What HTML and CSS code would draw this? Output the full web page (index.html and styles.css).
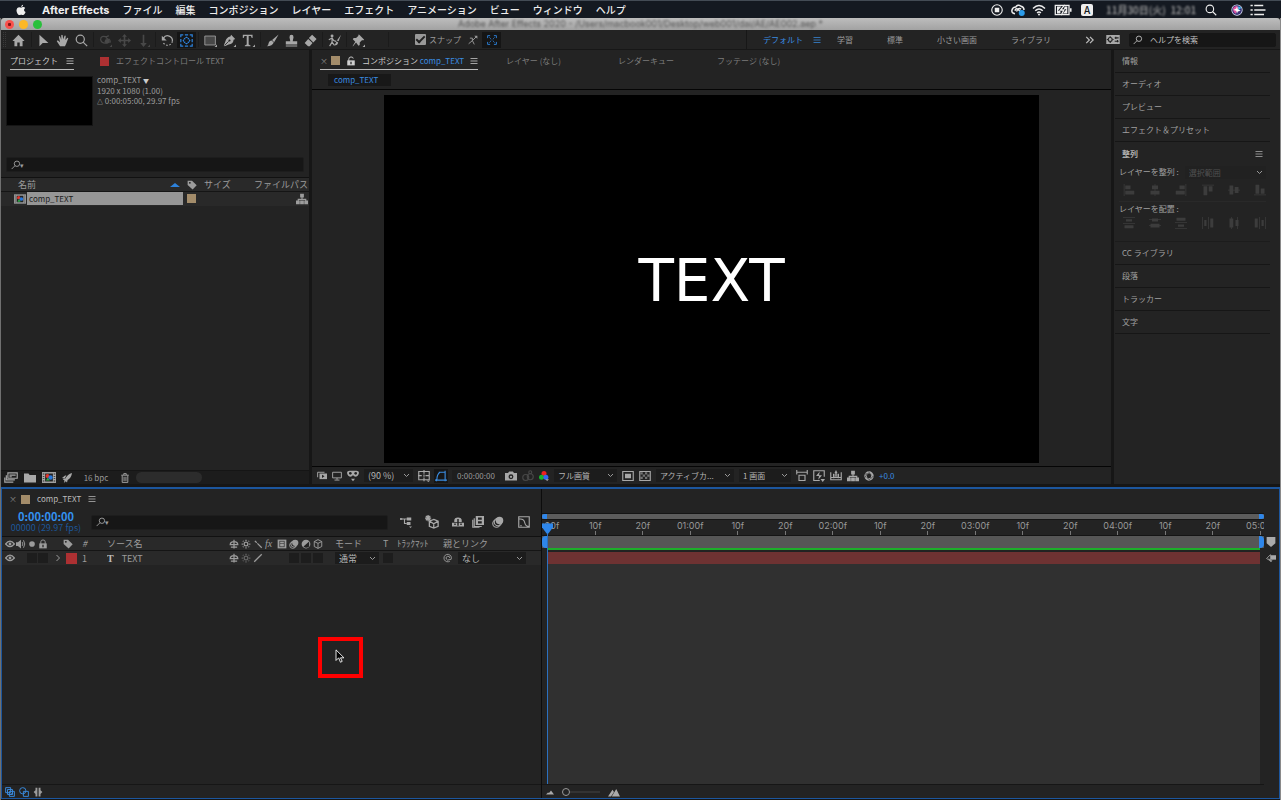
FILE: index.html
```html
<!DOCTYPE html>
<html lang="ja">
<head>
<meta charset="utf-8">
<title>After Effects</title>
<link rel="stylesheet" href="styles.css">
</head>
<body>
<svg class="sprite" aria-hidden="true">
  <symbol id="apple" viewBox="0 0 16 16"><path d="M10.800 1c.1 1.300-1 2.800-2.500 2.900C8.100 2.500 9.400 1.200 10.800 1zM8.400 4.800c.6 0 1.500-.8 2.700-.8 1.100 0 2 .6 2.500 1.300-2.300 1.400-1.900 4.500.5 5.500-.6 1.600-1.900 4-3.300 4-1 0-1.300-.6-2.500-.6s-1.600.6-2.500.6C3.900 14.800 2 11.500 2 8.700 2 5.700 3.900 4.200 5.700 4.200c1.100 0 2 .6 2.700.6z"/></symbol>
  <symbol id="home" viewBox="0 0 16 16"><path d="M8 1 0.500 8.500H3V15h3.500v-4.500h3V15H13V8.500h2.500z"/></symbol>
  <symbol id="arrow" viewBox="0 0 16 16"><path d="M3 1v14l4-4h7z"/></symbol>
  <symbol id="hand" viewBox="0 0 16 16"><path d="M5 15 1 9q0-1.500 1.500-1L5 10 3.500 3.500Q4 2 5 3l1.500 4L6.500 1.500Q7.200.2 8.200 1.500l.6 5L10.500 2q1.200-.8 1.500.5L11.500 7.500 14 4.500q1.200 0 1 1L12.500 12 11 15z"/></symbol>
  <symbol id="zoom" viewBox="0 0 16 16"><circle cx="6.500" cy="6.500" r="5" class="ln"/><path class="ln" d="m10 10 5 5"/></symbol>
  <symbol id="find" viewBox="0 0 16 16"><circle cx="9.500" cy="6" r="4.300" class="ln"/><path class="ln" d="M6.500 9 1 14.500"/></symbol>
  <symbol id="orbit" viewBox="0 0 16 16"><path class="ln" d="M10 4Q2 1 2 7q1 5 8 4m2-5q3 3 1 5M8 4l4-2M8 4l4 3"/><circle cx="10" cy="9" r="3"/><path d="M13 16h3v-3z"/></symbol>
  <symbol id="pan" viewBox="0 0 16 16"><path d="M8 0l3 3.500H9V7h3.500V5L16 8l-3.500 3V9H9v3.500h2L8 16l-3-3.500h2V9H3.500v2L0 8l3.500-3v2H7V3.500H5z"/></symbol>
  <symbol id="dolly" viewBox="0 0 16 16"><path d="M7 1h2v10h3l-4 5-4-5h3z"/><path d="M13 16h3v-3z"/></symbol>
  <symbol id="rotate" viewBox="0 0 16 16"><path class="ln" d="M3 5a6 6 0 0 1 11 4"/><path class="ln dash" d="M14 9a6 6 0 0 1-11.500 1"/><path d="M1 2v6h6z"/></symbol>
  <symbol id="anchor" viewBox="0 0 16 16"><path class="ln" d="M1 4V1h3m2 0h4m2 0h3v3m0 2v4m0 2v3h-3m-2 0H6m-2 0H1v-3m0-2V6M5 5l1.500 1.500M11 5 9.500 6.500M5 11l1.500-1.500M11 11 9.500 9.500"/><path d="M8 3l2 2H6zM8 13l2-2H6zM3 8l2-2v4zM13 8l-2-2v4z"/></symbol>
  <symbol id="rect" viewBox="0 0 16 16"><path fill="#484848" stroke="currentColor" d="M1 2.500h13v11H1z"/><path d="M13 16h3v-3z"/></symbol>
  <symbol id="pen" viewBox="0 0 16 16"><path d="M10 1l5 5-2 1q0 5-6 6l-5 2L1 14l2-5q1-5 6-6z"/><path stroke="#232323" d="m2 14 5-5"/><circle cx="8" cy="8" r="1.300" fill="#232323"/><path d="M13 16h3v-3z"/></symbol>
  <symbol id="type" viewBox="0 0 16 16"><path d="M1 1h12v4h-1l-1-2.500H8.200V13l2.300 1v1H3.500v-1l2.300-1V2.500H3L2 5H1zM13 16h3v-3z"/></symbol>
  <symbol id="brush" viewBox="0 0 16 16"><path d="M15.500.5 10 10 7.500 7.500zM7 8l2.500 2.500Q8 15 1 15q2-1 2-3 1-4 4-4z"/></symbol>
  <symbol id="stamp" viewBox="0 0 16 16"><path d="M6.500 9 5.500 4Q5.500 1 8 1t2.500 3l-1 5H15v4H1V9zM1 14h14v1.500H1z"/></symbol>
  <symbol id="eraser" viewBox="0 0 16 16"><path d="m10 1 5.500 5-4 4.500L6 5zM5.200 6l5.300 5L7 15H5L.8 11z"/></symbol>
  <symbol id="roto" viewBox="0 0 16 16"><circle cx="5" cy="2.500" r="1.800"/><path class="ln" d="M1 7l4-2 2 3 3 1M5 5v5l-3 5m3-5 3 4"/><path d="m16 1-3 8-2-1zM10.500 9l2 1.500Q12 14 8 14z"/></symbol>
  <symbol id="pin" viewBox="0 0 16 16"><path d="m9 1 6 6-1.500 1-1-.5-3 3v3l-1.500 1-3-4-4 5 0-1 3-5-3-3 1-1.500h3l3-3-.5-1z"/><path d="M13 16h3v-3z"/></symbol>
  <symbol id="snap" viewBox="0 0 16 16"><path class="ln" d="M1 14l6-5 3 6M7 9V5H3m4 4 6-6"/><path d="M10 1h5v5z"/></symbol>
  <symbol id="bounds" viewBox="0 0 16 16"><path class="ln" d="M1 5V1h4m6 0h4v4m0 6v4h-4M5 15H1v-4M4 4l2 2m6-2-2 2m-6 6 2-2m6 2-2-2M6 8h1m2 0h1"/></symbol>
  <symbol id="burger" viewBox="0 0 16 16"><path class="ln" d="M1 3h14M1 8h14M1 13h14"/></symbol>
  <symbol id="more" viewBox="0 0 16 16"><path class="ln bold" d="m2 3 5 5-5 5m6-10 5 5-5 5"/></symbol>
  <symbol id="wsp" viewBox="0 0 24 16"><path d="M0 0h24v16H0z"/><g fill="none" stroke="#232323" stroke-width="2"><circle cx="7" cy="8" r="3.500"/><path d="M7 2v2m0 8v2M1 8h2m8 0h2M15 5h7m-7 6h7M17 3v4m3 2v4"/></g></symbol>
  <symbol id="lock" viewBox="0 0 16 16"><path class="ln" d="M4.500 8V4.500q0-3 3.500-3t3.500 3V8"/><path d="M2 7h12v8H2z"/><path stroke="#232323" stroke-width="2" d="M8 9v4"/></symbol>
  <symbol id="unlock" viewBox="0 0 16 16"><path class="ln" d="M4.500 8V5q0-3.500 3.500-3.500T11.500 4"/><path d="M2 7h12v8H2z"/><path stroke="#232323" stroke-width="2" d="M8 9v4"/></symbol>
  <symbol id="tag" viewBox="0 0 16 16"><path fill-rule="evenodd" d="M1 1h7l7.500 7.500L9 15 1 8zM4.500 3a1.400 1.400 0 1 0 .1 0z"/></symbol>
  <symbol id="tree" viewBox="0 0 16 16"><path class="ln" d="M8 5v4M3 12V8.500h10V12"/><path d="M5.500 1h5v5h-5zM0 10h5v5H0zm11 0h5v5h-5zm-5.500 0h5v5h-5z"/></symbol>
  <symbol id="comp" viewBox="0 0 18 14"><path d="M0 0h18v14H0z"/><path fill="#232323" d="M4 2h10v10H4zM1 2h2v1H1zm0 3h2v1H1zm0 3h2v1H1zm0 3h2v1H1zM15 2h2v1h-2zm0 3h2v1h-2zm0 3h2v1h-2zm0 3h2v1h-2z"/><circle cx="7" cy="5" r="2.500" fill="#e0352b"/><circle cx="11" cy="7" r="2.800" fill="#2878dc"/><path fill="#2eaa49" d="m5 11 2.500-4L10 11z"/></symbol>
  <symbol id="clips" viewBox="0 0 18 14"><path class="ln" d="M5 1h12v7H5zM3 4v6h11M1 7v6h11M7 4h8M7 6h3"/></symbol>
  <symbol id="folder" viewBox="0 0 16 14"><path d="M0 1h6l1.500 2H16v10H0z"/></symbol>
  <symbol id="rocket" viewBox="0 0 16 16"><path d="M16 0q-1 8-7 11l-1 4-2-2-3 3 1-4-3-2 4-1Q9 2 16 0zM0 8l5-4 2 0-3 5z"/></symbol>
  <symbol id="trash" viewBox="0 0 16 16"><path class="ln" d="M2 3.500h12M6 3V1h4v2M3.500 4v11h9V4M6.500 6v7m3-7v7"/></symbol>
  <symbol id="eye" viewBox="0 0 16 16"><path class="ln bold" d="M1 8q7-9 14 0-7 8-14 0z"/><circle cx="8" cy="8" r="2.300"/></symbol>
  <symbol id="sound" viewBox="0 0 16 16"><path d="M0 5h3l5-4v14l-5-4H0z"/><path class="ln" d="M10 5q2 3 0 6m2-9q4 6 0 12"/></symbol>
  <symbol id="dot" viewBox="0 0 16 16"><circle cx="8" cy="8" r="4.500"/></symbol>
  <symbol id="shy" viewBox="0 0 16 16"><path class="ln bold" d="M8 1v14M2 9q0-5 6-5t6 5M1 9h14M3 13h10"/></symbol>
  <symbol id="sun" viewBox="0 0 16 16"><circle cx="8" cy="8" r="3" class="ln bold"/><path class="ln bold" d="M8 1v2m0 10v2M1 8h2m10 0h2M3 3l1 1m8 8 1 1M3 13l1-1m8-8 1-1"/></symbol>
  <symbol id="back" viewBox="0 0 16 16"><path class="ln bold" d="m3 3 3 3m1 1 7 7"/></symbol>
  <symbol id="slash" viewBox="0 0 16 16"><path class="ln bold" d="M2 14 14 2"/></symbol>
  <symbol id="film" viewBox="0 0 16 16"><path d="M1 1h14v14H1z"/><path fill="#232323" d="M4 3h8v10H4z"/><path d="M5 4h6v3H5zm0 4h6v4H5z"/></symbol>
  <symbol id="blur" viewBox="0 0 16 16"><circle cx="10" cy="6" r="5"/><circle cx="8" cy="8" r="5" class="ln"/><circle cx="6" cy="10" r="5" class="ln"/></symbol>
  <symbol id="adjust" viewBox="0 0 16 16"><circle cx="8" cy="8" r="7"/><path fill="#232323" d="M13 4v8q-5 4-9 0z"/></symbol>
  <symbol id="cube" viewBox="0 0 16 16"><path class="ln" d="m8 1 6 3v8l-6 3-6-3V4zM2 4l6 3 6-3M8 7v8"/></symbol>
  <symbol id="star3d" viewBox="0 0 16 16"><path class="ln" d="m10 5 5 2v6l-5 2-5-2V7zM5 7l5 3 5-3m-5 3v5M3.500 0v7M0 3.500h7M1 1l5 5m0-5L1 6"/></symbol>
  <symbol id="flow" viewBox="0 0 16 16"><path class="ln" d="M0 4h9M6 4v6h3"/><path d="M9 2h6v4H9zm0 6h5v4H9zm3 6h4l-2 2zM0 3h3v2H0z"/></symbol>
  <symbol id="shyguy" viewBox="0 0 16 16"><path d="M3 6q0-4 5-4t5 4v2H3zM0 9h16v5H0z"/><path stroke="#232323" stroke-width="2" d="M8 4v9M3 11h2m6 0h2"/></symbol>
  <symbol id="blend" viewBox="0 0 16 16"><path d="M5 0h11v12H5z"/><path class="ln" d="M3 3v11h10M1 5v10h9"/><path fill="#232323" d="M8 2h5v3H8zm0 5h5v3H8z"/></symbol>
  <symbol id="graph" viewBox="0 0 16 16"><path class="ln" d="M1 1h14v14H1zM1 4h2m0 9h2M3 4q5 0 6 5t6 5"/></symbol>
  <symbol id="swirl" viewBox="0 0 16 16"><path class="ln" d="M11 8a3 3 0 1 0-1 2.500q4 1 3.500-3A6 6 0 1 0 11 13"/></symbol>
  <symbol id="monitor" viewBox="0 0 16 16"><path class="ln" d="M1 2h14v9H1zM8 11v3M4 14.500h8"/></symbol>
  <symbol id="previews" viewBox="0 0 16 16"><path d="M4 4h12v9H4z"/><path class="ln" d="M1 10V2h11"/><path fill="#232323" d="m8 6 4 2.500L8 11z"/></symbol>
  <symbol id="mask" viewBox="0 0 18 16"><path d="M0 3q0-3 4-3h10q4 0 4 3-1 6-6 6L9 7 6 9Q1 9 0 3zM6 12h6l-3 4z"/><g fill="#232323"><circle cx="5" cy="4" r="2"/><circle cx="13" cy="4" r="2"/></g></symbol>
  <symbol id="guides" viewBox="0 0 16 16"><path class="ln" d="M1 2h14v11H1zM8 0v5m0 5v5M0 7.500h5m5 0h5M8 6v3"/><path d="M11 14h5l-2 2z"/></symbol>
  <symbol id="shape" viewBox="0 0 16 16"><path class="ln" d="M2.500 13q0-7 4-10H14M0 13.500h16M13.500 1v14M2 12v3M5 3h3"/></symbol>
  <symbol id="camera" viewBox="0 0 16 14"><path d="M0 3h4l1.500-2h5L12 3h4v10H0z"/><circle cx="8" cy="8" r="3.200" fill="#232323"/><circle cx="8" cy="8" r="1.500"/></symbol>
  <symbol id="person" viewBox="0 0 16 16"><circle cx="5" cy="10" r="4" class="ln"/><circle cx="11" cy="9" r="4" class="ln"/><circle cx="11" cy="3" r="2" class="ln"/></symbol>
  <symbol id="rgb" viewBox="0 0 16 16"><circle cx="8" cy="4" r="4" fill="#f02020"/><circle cx="4" cy="10" r="4" fill="#17b52b"/><circle cx="11" cy="10" r="4" fill="#3467ef"/><path d="M10 13h6l-3 3z"/></symbol>
  <symbol id="roi" viewBox="0 0 16 14"><path class="ln" d="M1 1h14v12H1z"/><path d="M4 4h8v6H4z"/></symbol>
  <symbol id="check" viewBox="0 0 16 14"><path class="ln" d="M1 1h14v12H1z"/><path opacity=".6" d="M2 2h3v3H2zm6 0h3v3H8zM5 5h3v3H5zm6 0h3v3h-3zM2 8h3v3H2zm6 0h3v3H8z"/></symbol>
  <symbol id="ratio" viewBox="0 0 16 16"><path class="ln" d="M1 0v6M15 0v6M1 3h14"/><path class="ln" d="M4 7h8v7H4z"/></symbol>
  <symbol id="fast" viewBox="0 0 16 16"><path class="ln" d="M9 14H1V1h14v8"/><path d="M9 2 4 8h4l-1 5 5-6H8zM10 12h6l-3 4z"/></symbol>
  <symbol id="tl" viewBox="0 0 16 16"><path class="ln" d="M1 3v10h14V3M1 10h14M5 8v3m6-3v3"/><path d="M4 5h2v4H4zm6 0h2v4h-2zM8 0l2 4H6zM7 4h2v5H7z"/></symbol>
  <symbol id="aperture" viewBox="0 0 16 16"><circle cx="8" cy="8" r="5.500" fill="none" stroke="currentColor" stroke-width="4"/><path stroke="#232323" d="m1 5 8-1M7 1l5 6m3 1-5 5m0 2-6-5M1 11l4-6"/></symbol>
  <symbol id="al" viewBox="0 0 16 16"><path d="M1 0h1v16H1zM3 2h7v5H3zm0 7h12v5H3z"/></symbol>
  <symbol id="ac" viewBox="0 0 16 16"><path d="M7.500 0h1v16h-1zM4 2h8v5H4zM2 9h12v5H2z"/></symbol>
  <symbol id="ad" viewBox="0 0 16 16"><path d="M0 0h16v1H0zm4 3h8v3H4zM0 8h16v1H0zm2 3h12v4H2z"/></symbol>
  <symbol id="am" viewBox="0 0 16 16"><path d="M0 3h16v1H0zm4-1h8v4H4zM0 11h16v1H0zm2-2h12v5H2z"/></symbol>
  <symbol id="copies" viewBox="0 0 16 16"><path class="ln" d="M1 1h8v8H1zM4 4h8v8H4zM7 7h8v8H7zM9 11h4"/></symbol>
  <symbol id="modes" viewBox="0 0 16 16"><circle cx="6" cy="6" r="5" class="ln"/><path class="ln" d="M7 7h8v8H7z"/></symbol>
  <symbol id="braces" viewBox="0 0 16 16"><path d="M4 1h3v14H4v-4L1 8l3-3zm5 0h3v4l3 3-3 3v4H9z"/></symbol>
  <symbol id="mount" viewBox="0 0 16 16"><path d="M0 14 6 5l2 3-4 6zM5 14l6-10 5 10z"/></symbol>
  <symbol id="hill" viewBox="0 0 16 16"><path d="m0 13 4-4 2 1 4-5 6 8z"/></symbol>
  <symbol id="wifi" viewBox="0 0 16 16"><path class="ln bold" d="M0 6q8-8 16 0M3 9q5-5 10 0M5.500 12q2.500-2.500 5 0"/><circle cx="8" cy="14" r="1.300"/></symbol>
  <symbol id="rec" viewBox="0 0 16 16"><circle cx="8" cy="8" r="7" class="ln"/><path d="M5 5h6v6H5z"/></symbol>
  <symbol id="cc" viewBox="0 0 18 16"><path class="ln bold" d="M5 13q-5-1-4-5t5-4q3-4 7-1 4 1 4 5M5 9q1-4 4-2l3 3M13 7q-3-3-6 3"/><circle cx="14" cy="12" r="4" fill="#2a9bea"/></symbol>
  <symbol id="battery" viewBox="0 0 20 14"><path class="ln" d="M1 1.500h16v11H1z"/><path d="M18 5h2v4h-2zM3 3h5L4 8h3v3H3zm12 8h-5l4-5h-3l1-3h3z"/><path class="ln" d="m12 1-5 6h4l-3 6"/></symbol>
  <symbol id="siri" viewBox="0 0 16 16"><circle cx="8" cy="8" r="7.500" fill="#dfe6fa"/><circle cx="8" cy="8" r="6.500" fill="#383074"/><path fill="#37bde9" d="M2 7q6-6 12-2L9 9z"/><path fill="#e14fa0" d="M3 5q5-5 7 1L6 13q-4-3-3-8z"/><path fill="#fff" d="m8 3 1 4 4 2-4 1-1 3-1-4-4-1 4-2z"/></symbol>
  <symbol id="list" viewBox="0 0 20 16"><path class="ln bold" d="M0 2h3m2 0h12M0 8h3m2 0h15M0 14h3m2 0h13"/></symbol>
  <symbol id="marker" viewBox="0 0 16 16"><path d="M1 0h14v10l-7 6-7-6z"/></symbol>
  <symbol id="addkey" viewBox="0 0 18 16"><path d="M9 3h9v8H9z"/><path class="ln" d="m1 9 7-7v11zm4 0 4 6 2-4"/></symbol>
</svg>

<header class="menubar">
  <svg class="i12 apple"><use href="#apple"/></svg>
  <nav class="menus">
    <b>After Effects</b><span>ファイル</span><span>編集</span><span>コンポジション</span><span>レイヤー</span><span>エフェクト</span><span>アニメーション</span><span>ビュー</span><span>ウィンドウ</span><span>ヘルプ</span>
  </nav>
  <div class="status">
    <svg class="i12"><use href="#rec"/></svg><svg class="w16"><use href="#cc"/></svg><svg class="w16"><use href="#wifi"/></svg><svg class="w18"><use href="#battery"/></svg><span class="ime">A</span><span class="clock">11月30日(火)&nbsp; 12:01</span><svg class="i12"><use href="#zoom"/></svg><svg class="i12 siri"><use href="#siri"/></svg><svg class="w16"><use href="#list"/></svg>
  </div>
</header>

<div class="window">
  <div class="titlebar">
    <i class="light red"></i><i class="light yellow"></i><i class="light green"></i>
    <span class="title">Adobe After Effects 2020 - /Users/macbook001/Desktop/web001/dai/AE/AE002.aep *</span>
  </div>

  <div class="toolbar">
    <i class="grip"></i>
    <div class="tools first"><button aria-label="ホーム"><svg><use href="#home"/></svg></button></div>
    <div class="tools"><button aria-label="選択"><svg><use href="#arrow"/></svg></button><button aria-label="手のひら"><svg><use href="#hand"/></svg></button><button aria-label="ズーム"><svg><use href="#zoom"/></svg></button></div>
    <div class="tools dim"><button aria-label="軌道"><svg><use href="#orbit"/></svg></button><button aria-label="パン"><svg><use href="#pan"/></svg></button><button aria-label="ドリー"><svg><use href="#dolly"/></svg></button></div>
    <div class="tools"><button aria-label="回転"><svg><use href="#rotate"/></svg></button><button class="on" aria-label="アンカーポイント"><svg><use href="#anchor"/></svg></button></div>
    <div class="tools"><button aria-label="長方形"><svg><use href="#rect"/></svg></button><button aria-label="ペン"><svg><use href="#pen"/></svg></button><button aria-label="横書き文字"><svg><use href="#type"/></svg></button></div>
    <div class="tools"><button aria-label="ブラシ"><svg><use href="#brush"/></svg></button><button aria-label="コピースタンプ"><svg><use href="#stamp"/></svg></button><button aria-label="消しゴム"><svg><use href="#eraser"/></svg></button></div>
    <div class="tools"><button aria-label="ロトブラシ"><svg><use href="#roto"/></svg></button></div>
    <div class="tools pins"><button aria-label="パペットピン"><svg><use href="#pin"/></svg></button></div>
    <div class="snapping">
      <label><input type="checkbox" checked>スナップ</label>
      <button aria-label="スナップ延長"><svg><use href="#snap"/></svg></button><button class="on" aria-label="境界"><svg><use href="#bounds"/></svg></button>
    </div>
    <div class="spaces">
      <a href="#" class="blue">デフォルト</a><svg class="i8 blue"><use href="#burger"/></svg><a href="#">学習</a><a href="#">標準</a><a href="#">小さい画面</a><a href="#">ライブラリ</a><svg class="i10"><use href="#more"/></svg>
    </div>
    <div class="help"><svg class="w16 wsp"><use href="#wsp"/></svg><div class="field"><svg class="i10"><use href="#find"/></svg><input aria-label="ヘルプを検索" placeholder="ヘルプを検索"></div></div>
  </div>

  <main class="upper">
    <section class="panel project">
      <div class="tabs"><span class="tab active">プロジェクト <svg class="i8"><use href="#burger"/></svg></span><span class="tab"><i class="sw redsw"></i>エフェクトコントロール TEXT</span></div>
      <div class="asset"><div class="thumb"></div><div class="meta"><p>comp_TEXT <small>▼</small></p><p>1920 x 1080 (1.00)</p><p><small>△</small> 0:00:05:00, 29.97 fps</p></div></div>
      <div class="field search"><svg class="i10"><use href="#find"/></svg><small>▾</small><input aria-label="プロジェクトを検索"></div>
      <table class="items">
        <colgroup><col class="c-name"><col class="c-tag"><col class="c-size"><col></colgroup>
        <thead><tr><th><span class="cell namehead">名前<i class="sort"></i></span></th><th><svg class="i10"><use href="#tag"/></svg></th><th>サイズ</th><th>ファイルパス</th></tr></thead>
        <tbody><tr><td><span class="cell"><svg class="w12"><use href="#comp"/></svg><span class="picked">comp_TEXT</span></span></td><td><i class="sw tan"></i></td><td></td><td class="end"><svg class="i12"><use href="#tree"/></svg></td></tr></tbody>
      </table>
      <div class="foot"><svg class="w14"><use href="#clips"/></svg><svg class="i12"><use href="#folder"/></svg><svg class="w14"><use href="#comp"/></svg><svg class="i10"><use href="#rocket"/></svg><button class="bpc">16 bpc</button><svg class="i10"><use href="#trash"/></svg><i class="thumbbar"></i></div>
    </section>

    <section class="panel viewer">
      <div class="tabs"><span class="tab active"><span class="x">×</span><i class="sw tan"></i><svg class="i10"><use href="#unlock"/></svg><span>コンポジション <span class="blue">comp_TEXT</span></span><svg class="i8"><use href="#burger"/></svg></span><span class="tab t2">レイヤー (なし)</span><span class="tab t3">レンダーキュー</span><span class="tab t4">フッテージ (なし)</span></div>
      <div class="crumbs"><button class="blue">comp_TEXT</button></div>
      <div class="stage"><div class="canvas">TEXT</div></div>
      <div class="viewbar">
        <svg class="i10"><use href="#previews"/></svg><svg class="i10"><use href="#monitor"/></svg><svg class="i12"><use href="#mask"/></svg>
        <select class="s-zoom" aria-label="倍率"><option>(90 %)</option></select>
        <svg class="i12"><use href="#guides"/></svg><span class="on"><svg class="i12"><use href="#shape"/></svg></span>
        <span class="time">0:00:00:00</span>
        <svg class="i12"><use href="#camera"/></svg><svg class="i12 dim"><use href="#person"/></svg><svg class="i10"><use href="#rgb"/></svg>
        <select class="s-res" aria-label="解像度"><option>フル画質</option></select>
        <svg class="i12"><use href="#roi"/></svg><svg class="i12"><use href="#check"/></svg>
        <select class="s-cam" aria-label="3D ビュー"><option>アクティブカ...</option></select><select class="s-view" aria-label="レイアウト"><option>1 画面</option></select>
        <svg class="i12"><use href="#ratio"/></svg><svg class="i12"><use href="#fast"/></svg><svg class="i12"><use href="#tl"/></svg><svg class="i12"><use href="#tree"/></svg><svg class="i10"><use href="#aperture"/></svg><span class="blue exp">+0.0</span>
      </div>
    </section>

    <aside class="panel side">
      <div class="stack">
        <h2>情報</h2><h2>オーディオ</h2><h2>プレビュー</h2><h2>エフェクト＆プリセット</h2>
        <h2 class="open">整列<svg class="i8"><use href="#burger"/></svg></h2>
        <div class="align">
          <label>レイヤーを整列 : <select disabled><option>選択範囲</option></select></label>
          <div class="icons"><svg><use href="#al"/></svg><svg><use href="#ac"/></svg><svg class="flip"><use href="#al"/></svg><svg class="turn"><use href="#al"/></svg><svg class="turn"><use href="#ac"/></svg><svg class="turnflip"><use href="#al"/></svg></div>
          <p>レイヤーを配置 :</p>
          <div class="icons last"><svg><use href="#ad"/></svg><svg><use href="#am"/></svg><svg class="upside"><use href="#ad"/></svg><svg class="back"><use href="#ad"/></svg><svg class="turn"><use href="#am"/></svg><svg class="turn"><use href="#ad"/></svg></div>
        </div>
        <h2>CC ライブラリ</h2><h2>段落</h2><h2>トラッカー</h2><h2>文字</h2>
      </div>
    </aside>
  </main>

  <section class="timeline">
    <div class="layers">
      <div class="tltab"><span class="x">×</span><i class="sw tan"></i>comp_TEXT<svg class="i8"><use href="#burger"/></svg></div>
      <div class="controls">
        <div class="tc"><b>0:00:00:00</b><span>00000 (29.97 fps)</span></div>
        <div class="field"><svg class="i10"><use href="#find"/></svg><small>▾</small><input aria-label="レイヤーを検索"></div>
        <div class="switches"><svg class="i12"><use href="#flow"/></svg><svg class="i14"><use href="#star3d"/></svg><svg class="i12"><use href="#shyguy"/></svg><svg class="i12"><use href="#blend"/></svg><svg class="i12"><use href="#blur"/></svg><svg class="i12"><use href="#graph"/></svg></div>
      </div>
      <table class="rows">
        <colgroup><col class="k1"><col class="k2"><col class="k3"><col class="k4"><col class="k5"><col class="k6"><col class="k7"><col class="k8"><col></colgroup>
        <thead><tr>
          <th><span class="cell av"><svg><use href="#eye"/></svg><svg><use href="#sound"/></svg><svg><use href="#dot"/></svg><svg><use href="#lock"/></svg></span></th>
          <th class="mid"><svg class="i10"><use href="#tag"/></svg></th><th><em>#</em></th><th>ソース名</th>
          <th><span class="cell sws"><svg><use href="#shy"/></svg><svg><use href="#sun"/></svg><svg><use href="#back"/></svg><em class="fx">fx</em><svg><use href="#film"/></svg><svg><use href="#blur"/></svg><svg><use href="#adjust"/></svg><svg><use href="#cube"/></svg></span></th>
          <th>モード</th><th>T</th><th>ﾄﾗｯｸﾏｯﾄ</th><th>親とリンク</th>
        </tr></thead>
        <tbody><tr>
          <td><span class="cell av"><svg><use href="#eye"/></svg><i></i><i class="box"></i><i class="box"></i></span></td>
          <td><span class="cell lab"><svg class="i8" viewBox="0 0 16 16"><path class="ln bold" d="m5 2 6 6-6 6"/></svg><i class="sw redsw"></i></span></td><td>1</td>
          <td><span class="cell lname"><b>T</b>TEXT</span></td>
          <td><span class="cell sws"><svg><use href="#shy"/></svg><svg class="faint"><use href="#sun"/></svg><svg><use href="#slash"/></svg><i></i><i></i><i class="box"></i><i class="box"></i><i class="box"></i></span></td>
          <td><select class="s-mode" aria-label="モード"><option>通常</option></select></td><td><i class="box"></i></td><td></td>
          <td><span class="cell par"><svg class="i10"><use href="#swirl"/></svg><select class="s-par" aria-label="親とリンク"><option>なし</option></select></span></td>
        </tr></tbody>
      </table>
      <div class="foot2"><svg class="blue"><use href="#copies"/></svg><svg class="blue"><use href="#modes"/></svg><svg><use href="#braces"/></svg></div>
    </div>

    <div class="graph">
      <div class="nav"><i></i><i></i></div>
      <div class="ruler"><div class="marks"><span>0:00f</span><span>10f</span><span>20f</span><span>01:00f</span><span>10f</span><span>20f</span><span>02:00f</span><span>10f</span><span>20f</span><span>03:00f</span><span>10f</span><span>20f</span><span>04:00f</span><span>10f</span><span>20f</span><span>05:00f</span></div></div>
      <div class="work"><i></i><i></i></div>
      <div class="track"><div class="bar"></div></div>
      <div class="zoomer"><svg class="i8"><use href="#hill"/></svg><input type="range" min="0" max="100" value="0" aria-label="ズーム"><svg class="i12"><use href="#mount"/></svg></div>
      <div class="playhead"><svg viewBox="0 0 12 11"><path d="M0 0h12v4L7 11H5L0 4z"/></svg></div>
    </div>
    <div class="edge"><svg class="i10"><use href="#marker"/></svg><svg class="i10"><use href="#addkey"/></svg></div>
  </section>
</div>

<div class="callout"><svg viewBox="0 0 11 17"><path fill="#000" stroke="#fff" d="M1 1v12l3-3 2 5 2-1-2-4h4z"/></svg></div>
</body>
</html>
```
FILE: styles.css
```css
* { box-sizing: border-box; }
html, body { height: 100%; margin: 0; }
body {
  display: flex; flex-direction: column; overflow: hidden; position: relative;
  background: #161616; color: #9c9c9c;
  font: 8px/12px "Noto Sans CJK JP", sans-serif;
}
p, h2 { margin: 0; font-weight: 400; }
svg { flex: none; display: block; width: 10px; height: 10px; fill: currentColor; }
.sprite { position: absolute; width: 0; height: 0; }
.ln { fill: none; stroke: currentColor; stroke-width: 1.5; }
.bold { stroke-width: 2; }
.dash { stroke-dasharray: 2 2; }
.i8 { width: 8px; height: 8px; }
.i10 { width: 10px; height: 10px; }
.i12 { width: 12px; height: 12px; }
.i14 { width: 14px; height: 14px; }
.w12 { width: 12px; height: 10px; }
.w14 { width: 14px; height: 11px; }
.w16 { width: 16px; height: 12px; }
.w18 { width: 18px; height: 12px; }
i { display: block; flex: none; }
button, input, select { font: inherit; color: inherit; border: 0; padding: 0; margin: 0; background: none; border-radius: 0; outline: 0; }
a { color: inherit; text-decoration: none; }
.blue { color: #3a8ce0; }
.dim { color: #484848; }
.x { color: #888; width: 5px; }
.sw { width: 9px; height: 9px; }
.redsw { background: #ac3032; }
.tan { background: #a38c6a; }
select {
  appearance: none; height: 13px; line-height: 13px; padding: 0 12px 0 4px; color: #b4b4b4;
  background: #1c1c1c url("data:image/svg+xml,%3Csvg xmlns='http://www.w3.org/2000/svg' width='7' height='5'%3E%3Cpath d='M1 1l2.500 2.500L6 1' fill='none' stroke='%23999'/%3E%3C/svg%3E") no-repeat right 3px center;
}

.menubar {
  height: 18px; flex: none; display: flex; align-items: center; padding: 0 17px 0 15px;
  background: #141921; border-top: 1px solid #434b55; color: #eee; font-size: 10px; font-weight: 500;
}
.menus { display: flex; gap: 13px; margin-left: 15px; white-space: nowrap; }
.menus b { font: 700 11px/12px Inter, sans-serif; }
.status { display: flex; align-items: center; gap: 9px; margin-left: auto; }
.status .w16 { margin: 0 -2px; }
.ime { background: #eee; color: #141921; width: 12px; height: 12px; border-radius: 2px; text-align: center; }
.clock { filter: blur(1px); color: #aaa; width: 88px; margin: 0 2px 0 4px; white-space: nowrap; }
.siri { margin-left: 5px; }

.window { flex: 1; min-height: 0; display: flex; flex-direction: column; border-left: 1px solid #707070; border-right: 1px solid #8a8a8a; }
.titlebar { height: 12px; flex: none; display: flex; align-items: center; gap: 5px; padding-left: 4px; background: linear-gradient(#bdbdbd, #a2a2a2); border-radius: 3px 3px 0 0; }
.light { width: 9px; height: 9px; border-radius: 50%; }
.red { background: radial-gradient(#7d1414 20%, #f9504b 30%); }
.yellow { background: #fcb827; }
.green { background: #29c03b; }
.title { flex: 1; text-align: center; color: #555; filter: blur(1px); font: 9px/12px Inter, sans-serif; white-space: nowrap; padding-right: 46px; }

.toolbar { height: 20px; flex: none; display: flex; align-items: center; background: #232323; border-bottom: 1px solid #171717; white-space: nowrap; padding-right: 4px; }
.grip { width: 3px; height: 15px; margin: 0 2px; border: 1px dotted #3a3a3a; }
.tools { display: flex; height: 15px; padding: 0 2px; border-left: 1px solid #1b1b1b; }
.tools.first { padding: 0 3px 0 1px; border: 0; }
.tools button, .snapping button { width: 19px; height: 16px; display: grid; place-items: center; }
.tools svg { width: 13px; height: 13px; }
.tools:not(.dim) { color: #a8a8a8; }
.tools .on, .snapping .on { background: #151515; color: #2d82dc; }
.pins { width: 43px; border-right: 1px solid #1b1b1b; }
.snapping { display: flex; align-items: center; margin-left: 26px; flex: 1; }
.snapping label { display: flex; align-items: center; gap: 3px; }
.snapping input { appearance: none; width: 11px; height: 11px; background: #999; border-radius: 1px; display: grid; place-items: center; }
.snapping input:checked::after { content: ""; width: 7px; height: 3px; margin-top: -2px; border: solid #222; border-width: 0 0 2px 2px; transform: rotate(-45deg); }
.snapping button:first-of-type { margin-left: 2px; }
.spaces { display: flex; align-items: center; gap: 34px; height: 100%; padding: 0 10px 0 16px; border-left: 1px solid #171717; }
.spaces svg { margin-left: -24px; margin-right: -18px; }
.spaces svg:last-child { margin: 0; color: #bbb; }
.help { display: flex; align-items: center; gap: 8px; flex: none; width: 171px; }
.wsp { height: 9px; color: #a8a8a8; }
.field { display: flex; align-items: center; background: #161616; height: 14px; padding: 0 4px; border-radius: 2px; border: 1px solid #1d1d1d; }
.field input { flex: 1; min-width: 0; }
.field small { font-size: 7px; margin-left: -1px; }
.help .field { flex: 1; gap: 7px; color: #b4b4b4; border-color: #161616; padding-left: 3px; }
.help input::placeholder { color: #c0c0c0; opacity: 1; }

.upper { flex: 438 1 0; min-height: 0; display: grid; grid-template-columns: 308px minmax(0, 1fr) 166px; gap: 3px; padding-bottom: 3px; }
.panel { background: #232323; display: flex; flex-direction: column; min-width: 0; }
.tabs { display: flex; height: 23px; flex: none; color: #7c7c7c; white-space: nowrap; }
.tab { display: flex; align-items: center; height: 20px; padding-top: 2px; }
.tab.active { color: #d0d0d0; border-bottom: 1px solid #bbb; gap: 8px; }
.project .tabs { padding-left: 9px; gap: 26px; }
.project .tab .sw { margin-right: 7px; }
.asset { display: flex; gap: 4px; padding: 3px 5px; height: 84px; }
.thumb { width: 87px; height: 50px; background: #000; border: 1px solid #151515; }
.meta { line-height: 10px; margin-top: -1px; }
.meta small { font-size: 6px; color: #ccc; }
.search { margin: 0 5px 5px; height: 15px; }
table { border-collapse: collapse; table-layout: fixed; width: 100%; }
th, td { padding: 0; font-weight: 400; text-align: left; white-space: nowrap; overflow: hidden; vertical-align: middle; height: 14px; line-height: 13px; }
th { border-top: 1px solid #111; border-bottom: 1px solid #151515; font-size: 9px; }
thead, tbody tr { background: #292929; }
.cell { display: flex; align-items: center; }
.c-name { width: 186px; } .c-tag { width: 17px; } .c-size { width: 50px; }
.namehead { padding: 0 7px 0 17px; justify-content: space-between; }
.sort { border: solid transparent; border-width: 0 5px 4px; border-bottom-color: #2d82dc; }
.items td .cell { padding: 0 4px 0 13px; gap: 1px; }
.picked { flex: 1; background: #969696; color: #1c1c1c; padding-left: 2px; }
.end { padding-right: 1px; }
.end svg { margin-left: auto; }
.foot { margin-top: auto; height: 14px; display: flex; align-items: center; gap: 6px; padding-left: 3px; background: #1c1c1c; border-top: 1px solid #151515; }
.foot svg { color: #a8a8a8; }
.bpc { width: 36px; line-height: 12px; color: #999; }
.thumbbar { width: 66px; height: 11px; border-radius: 6px; background: #2c2c2c; }

.viewer .tabs { padding-left: 8px; }
.viewer .tab.active { gap: 6px; }
.t2 { margin-left: 28px; } .t3 { margin-left: 57px; } .t4 { margin-left: 43px; }
.crumbs { height: 17px; flex: none; border-bottom: 1px solid #050505; padding: 1px 16px; }
.crumbs button { display: block; width: 63px; height: 12px; line-height: 12px; background: #181818; text-align: left; padding-left: 6px; }
.stage { flex: 1; min-height: 0; display: flex; justify-content: center; padding: 5px 0 3px; border-bottom: 1px solid #050505; }
.canvas { height: 100%; aspect-ratio: 16 / 9; background: #000; color: #fff; display: grid; place-items: center; padding-top: 4px; font: 58px/60px "DejaVu Sans", sans-serif; }
.viewbar { height: 17px; flex: none; display: flex; align-items: center; gap: 5px; padding-left: 5px; white-space: nowrap; color: #a8a8a8; }
.viewbar .on { background: #161616; color: #3a8ce0; margin: 0 -1px; padding: 1px; }
.time { width: 48px; text-align: center; background: #1e1e1e; color: #999; }
.s-zoom { width: 49px; font-size: 9px; } .s-res { width: 63px; } .s-cam { width: 78px; } .s-view { width: 52px; }

.stack { width: 155px; margin-left: 1px; color: #a0a0a0; }
.stack h2 { font-size: 8px; line-height: 22px; height: 23px; padding: 0 7px; border-bottom: 1px solid #161616; }
.stack .open { display: flex; align-items: center; justify-content: space-between; border: 0; font-weight: 700; color: #b0b0b0; }
.align { height: 77px; padding: 0 4px; border-bottom: 1px solid #1c1c1c; }
.align label { display: flex; align-items: center; height: 14px; gap: 6px; white-space: nowrap; }
.align select { flex: 1; min-width: 0; color: #505050; background-color: #212121; opacity: 1; }
.icons { display: flex; justify-content: space-between; padding: 5px 0 5px 4px; color: #3c3c3c; }
.icons svg { width: 12px; height: 12px; }
.icons + p { border-top: 1px solid #292929; line-height: 14px; }
.icons.last { padding-top: 1px; }
.flip { transform: scaleX(-1); } .turn { transform: rotate(90deg); } .back { transform: rotate(-90deg); }
.turnflip { transform: rotate(90deg) scaleX(-1); } .upside { transform: scaleY(-1); }

.timeline { flex: 311 1 0; min-height: 0; display: grid; grid-template-columns: 540px minmax(0, 1fr) 13px; border: 1px solid #1c569e; border-top-width: 2px; background: #232323; margin-bottom: 1px; }
.layers { display: flex; flex-direction: column; border-right: 1px solid #0c0c0c; }
.tltab { height: 20px; display: flex; align-items: center; gap: 7px; padding-left: 7px; color: #bbb; }
.controls { height: 27px; display: flex; align-items: center; padding: 1px 11px 2px 6px; }
.tc { width: 83px; color: #1c5698; white-space: nowrap; text-align: center; padding-right: 7px; }
.tc b { display: block; color: #3391f0; font-size: 11px; line-height: 12px; }
.tc span { display: block; font-size: 9px; line-height: 12px; }
.controls .field { width: 297px; height: 15px; }
.switches { display: flex; align-items: center; gap: 8px; margin-left: auto; color: #a8a8a8; }
.switches svg:nth-child(2) { margin: 0 5px; }
.switches svg:last-child { margin-left: 6px; }
.rows td { font-size: 9px; }
.k1 { width: 52px; } .k2 { width: 28px; } .k3 { width: 25px; } .k4 { width: 122px; } .k5 { width: 106px; } .k6 { width: 48px; } .k7 { width: 14px; } .k8 { width: 46px; }
.av { gap: 1px; padding-left: 3px; }
.av i, .sws > *, .box { width: 10px; height: 10px; }
.box { background: #1d1d1d; }
.faint { color: #666; }
.mid svg { margin-left: 9px; }
.sws { gap: 2px; }
.fx { font: italic 10px/10px "Liberation Serif", serif; }
.lab { gap: 4px; }
.lab .sw { width: 11px; height: 11px; }
.lname { gap: 8px; }
.lname b { font-family: "Liberation Serif", serif; font-size: 10px; color: #bbb; }
.par { gap: 5px; }
.s-mode { width: 44px; display: block; height: 12px; }
.s-par { width: 68px; height: 12px; }
.foot2 { margin-top: auto; height: 14px; display: flex; align-items: center; gap: 4px; padding-left: 3px; border-top: 1px solid #161616; }

.graph { position: relative; display: flex; flex-direction: column; padding: 24px 2px 0 0; min-width: 0; }
.nav { height: 7px; flex: none; display: flex; justify-content: space-between; background: #5c5c5c; border: solid #151515; border-width: 1px 0; }
.nav i, .work i { width: 5px; background: #2e86ea; border-radius: 4px 0 0 4px; }
.nav i:last-child, .work i:last-child { border-radius: 0 4px 4px 0; }
.ruler { height: 16px; flex: none; overflow: hidden; color: #999; font: 9px/11px Inter, sans-serif; border-bottom: 1px solid #151515; }
.marks { display: flex; margin: 0 -20px 0 -18px; height: 15px; }
.marks span { flex: 1 1 0; min-width: 0; text-align: center; display: flex; flex-direction: column; align-items: center; justify-content: space-between; }
.marks span::after { content: ""; width: 1px; height: 4px; background: #777; }
.work { height: 12px; flex: none; display: flex; justify-content: space-between; background: #565656; }
.track { flex: 1; margin: 0 4px 0 5px; background: #303030; border-top: 2px solid #1dae2a; }
.bar { height: 14px; background: #6e3232; border-top: 2px solid #222; }
.zoomer { height: 14px; flex: none; display: flex; align-items: center; gap: 8px; padding-left: 4px; border-top: 1px solid #161616; color: #aaa; }
.zoomer input { appearance: none; width: 38px; height: 2px; background: #333; }
.zoomer input::-webkit-slider-thumb { appearance: none; width: 8px; height: 8px; border: 1px solid #999; border-radius: 50%; background: #232323; }
.playhead { position: absolute; left: 5px; top: 34px; bottom: 14px; width: 1px; background: #2b70c0; color: #2e86ea; }
.playhead svg { width: 11px; height: 11px; margin-left: -5px; }
.edge { padding-top: 48px; display: flex; flex-direction: column; gap: 6px; color: #aaa; }

.callout { position: absolute; left: 318px; top: 637px; width: 45px; height: 41px; border: 4px solid #f00; padding: 8px 0 0 13px; }
.callout svg { width: 10px; height: 15px; }
```
